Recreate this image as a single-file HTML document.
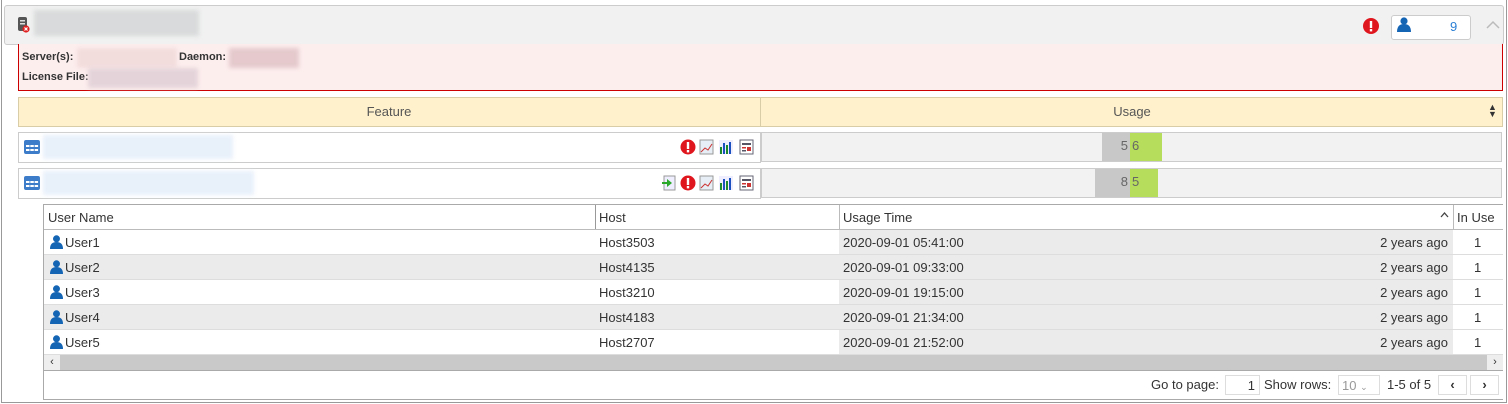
<!DOCTYPE html>
<html><head><style>
*{box-sizing:border-box;margin:0;padding:0}
body{width:1508px;height:404px;background:#fff;font-family:"Liberation Sans",sans-serif;font-size:13px;color:#333;position:relative;overflow:hidden}
.a{position:absolute}
.blur{position:absolute;filter:blur(2px)}
td{padding:0 5px}
</style></head><body>
<div class="a" style="left:1px;top:0;width:1506px;height:403px;border:1px solid #999;border-top:none"></div>
<div class="a" style="left:4px;top:5px;width:1500px;height:40px;background:#f1f1f1;border:1px solid #ccc;border-radius:3px"></div>
<svg class="a" style="left:17px;top:17px" width="14" height="16" viewBox="0 0 14 16"><rect x="1" y="0" width="9" height="14" rx="2" fill="#555"/><rect x="3" y="3" width="5" height="1.5" fill="#ddd"/><rect x="3" y="6" width="5" height="1.5" fill="#ddd"/><circle cx="9" cy="12" r="3.6" fill="#e02020"/><path d="M7.5 10.5l3 3M10.5 10.5l-3 3" stroke="#fff" stroke-width="1.2"/></svg>
<div class="blur" style="left:34px;top:10px;width:165px;height:26px;background:#d8dadb"></div>
<svg class="a" style="left:1363px;top:18px" width="16" height="16"><circle cx="8" cy="8" r="8" fill="#e0161e"/><rect x="6.8" y="3" width="2.4" height="7" fill="#fff"/><rect x="6.8" y="11" width="2.4" height="2.4" fill="#fff"/></svg>
<div class="a" style="left:1391px;top:15px;width:80px;height:25px;background:#fff;border:1px solid #ccc;border-radius:3px"></div>
<svg class="a" style="left:1397px;top:17px" width="14" height="15"><circle cx="7" cy="4" r="3.6" fill="#1565b5"/><path d="M0 15 Q0 7 7 7 Q14 7 14 15Z" fill="#1565b5"/></svg>
<div class="a" style="left:1450px;top:19px;color:#2a7fd4">9</div>
<svg class="a" style="left:1486px;top:20px" width="14" height="9"><path d="M1 8L7 2L13 8" stroke="#bbb" stroke-width="1.5" fill="none"/></svg>
<div class="a" style="left:18px;top:44px;width:1485px;height:47px;background:#fdeeee;border:1px solid #c00;border-top:none"></div>
<div class="a" style="left:22px;top:51px;font-size:11px;font-weight:bold">Server(s):</div>
<div class="blur" style="left:77px;top:48px;width:100px;height:20px;background:#f3dcdc"></div>
<div class="a" style="left:179px;top:51px;font-size:11px;font-weight:bold">Daemon:</div>
<div class="blur" style="left:229px;top:48px;width:70px;height:20px;background:#e5c9cc"></div>
<div class="a" style="left:22px;top:71px;font-size:11px;font-weight:bold">License File:</div>
<div class="blur" style="left:88px;top:68px;width:110px;height:20px;background:#e4d4da"></div>
<div class="a" style="left:18px;top:97px;width:1485px;height:30px;background:#fff1cc;border:1px solid #d9cda8"></div>
<div class="a" style="left:760px;top:97px;width:1px;height:30px;background:#d9cda8"></div>
<div class="a" style="left:18px;top:104px;width:742px;text-align:center;color:#555">Feature</div>
<div class="a" style="left:761px;top:104px;width:742px;text-align:center;color:#555">Usage</div>
<div class="a" style="left:1488px;top:104px;font-size:9px;line-height:7px">▲<br>▼</div>
<!-- row1 -->
<div class="a" style="left:18px;top:132px;width:743px;height:31px;border:1px solid #ccc;background:#fff"></div>
<div class="a" style="left:761px;top:132px;width:741px;height:30px;border:1px solid #ccc;background:#f2f2f2"></div>
<div class="a" style="left:1102px;top:133px;width:28px;height:28px;background:#c8c8c8;color:#666;text-align:right;padding:5px 2px 0 0">5</div>
<div class="a" style="left:1130px;top:133px;width:32px;height:28px;background:#b6dd5c;color:#666;padding:5px 0 0 2px">6</div>
<div class="a" style="left:18px;top:168px;width:743px;height:31px;border:1px solid #ccc;background:#fff"></div>
<div class="a" style="left:761px;top:168px;width:741px;height:30px;border:1px solid #ccc;background:#f2f2f2"></div>
<div class="a" style="left:1095px;top:169px;width:35px;height:28px;background:#c8c8c8;color:#666;text-align:right;padding:5px 2px 0 0">8</div>
<div class="a" style="left:1130px;top:169px;width:28px;height:28px;background:#b6dd5c;color:#666;padding:5px 0 0 2px">5</div>
<svg class="a" style="left:24px;top:140px" width="16" height="14"><rect width="16" height="14" rx="2" fill="#3d7cc9"/><g fill="#fff"><rect x="2" y="5" width="3.5" height="2"/><rect x="6.3" y="5" width="3.5" height="2"/><rect x="10.6" y="5" width="3.5" height="2"/><rect x="2" y="9" width="3.5" height="2"/><rect x="6.3" y="9" width="3.5" height="2"/><rect x="10.6" y="9" width="3.5" height="2"/></g></svg>
<svg class="a" style="left:24px;top:176px" width="16" height="14"><rect width="16" height="14" rx="2" fill="#3d7cc9"/><g fill="#fff"><rect x="2" y="5" width="3.5" height="2"/><rect x="6.3" y="5" width="3.5" height="2"/><rect x="10.6" y="5" width="3.5" height="2"/><rect x="2" y="9" width="3.5" height="2"/><rect x="6.3" y="9" width="3.5" height="2"/><rect x="10.6" y="9" width="3.5" height="2"/></g></svg>
<div class="blur" style="left:43px;top:135px;width:190px;height:24px;background:#e8f0fa"></div>
<div class="blur" style="left:43px;top:171px;width:211px;height:24px;background:#e8f0fa"></div>
<!-- action icons -->
<svg class="a" style="left:680px;top:139px" width="76" height="16">
<circle cx="8" cy="8" r="7.5" fill="#e0161e"/><rect x="6.8" y="3" width="2.4" height="7" fill="#fff"/><rect x="6.8" y="11" width="2.4" height="2.4" fill="#fff"/>
<rect x="20" y="1" width="13" height="14" fill="#e8eef5" stroke="#999"/><path d="M21 13L25 9L28 11L32 5" stroke="#c33" fill="none"/>
<rect x="39" y="1" width="14" height="14" fill="#eef"/><rect x="40" y="8" width="2" height="7" fill="#1a8a2a"/><rect x="43" y="4" width="2" height="11" fill="#1a50c0"/><rect x="46" y="6" width="2" height="9" fill="#1a8a2a"/><rect x="49" y="3" width="2" height="12" fill="#1a50c0"/>
<rect x="60" y="1" width="13" height="14" fill="#fff" stroke="#667"/><rect x="62" y="4" width="9" height="2" fill="#556"/><rect x="62" y="8" width="4" height="1.5" fill="#c33"/><rect x="67" y="8" width="4" height="4" fill="#c33"/><rect x="62" y="11" width="4" height="1.5" fill="#556"/>
</svg>
<svg class="a" style="left:661px;top:175px" width="95" height="16">
<rect x="3" y="1" width="11" height="14" fill="#eef" stroke="#999"/><path d="M1 7h5V4l5 4-5 4V9H1z" fill="#2aa82a"/>
<g transform="translate(19,0)"><circle cx="8" cy="8" r="7.5" fill="#e0161e"/><rect x="6.8" y="3" width="2.4" height="7" fill="#fff"/><rect x="6.8" y="11" width="2.4" height="2.4" fill="#fff"/>
<rect x="20" y="1" width="13" height="14" fill="#e8eef5" stroke="#999"/><path d="M21 13L25 9L28 11L32 5" stroke="#c33" fill="none"/>
<rect x="39" y="1" width="14" height="14" fill="#eef"/><rect x="40" y="8" width="2" height="7" fill="#1a8a2a"/><rect x="43" y="4" width="2" height="11" fill="#1a50c0"/><rect x="46" y="6" width="2" height="9" fill="#1a8a2a"/><rect x="49" y="3" width="2" height="12" fill="#1a50c0"/>
<rect x="60" y="1" width="13" height="14" fill="#fff" stroke="#667"/><rect x="62" y="4" width="9" height="2" fill="#556"/><rect x="62" y="8" width="4" height="1.5" fill="#c33"/><rect x="67" y="8" width="4" height="4" fill="#c33"/><rect x="62" y="11" width="4" height="1.5" fill="#556"/></g>
</svg>
<!-- table -->
<div class="a" style="left:43px;top:204px;width:1460px;height:196px;border:1px solid #aaa;border-right:none;background:#fff"></div>
<div class="a" style="left:44px;top:229px;width:1459px;height:1px;background:#bbb"></div>
<div class="a" style="left:595px;top:205px;width:1px;height:24px;background:#999"></div>
<div class="a" style="left:839px;top:205px;width:1px;height:24px;background:#bbb"></div>
<div class="a" style="left:1453px;top:205px;width:1px;height:24px;background:#bbb"></div>
<div class="a" style="left:48px;top:210px">User Name</div>
<div class="a" style="left:599px;top:210px">Host</div>
<div class="a" style="left:843px;top:210px">Usage Time</div>
<svg class="a" style="left:1440px;top:212px" width="9" height="6"><path d="M1 5L4.5 1L8 5" stroke="#444" stroke-width="1.3" fill="none"/></svg>
<div class="a" style="left:1457px;top:210px">In Use</div>
<div id="rows"></div>
<div class="a" style="left:44px;top:355px;width:1459px;height:15px;background:#c9c9c9"></div>
<div class="a" style="left:44px;top:355px;width:16px;height:15px;background:#eee;font-size:11px;text-align:center;line-height:15px">‹</div>
<div class="a" style="left:1487px;top:355px;width:16px;height:15px;background:#eee;font-size:11px;text-align:center;line-height:15px">›</div>
<div class="a" style="left:44px;top:370px;width:1459px;height:1px;background:#aaa"></div>
<div class="a" style="left:1151px;top:377px">Go to page:</div>
<div class="a" style="left:1225px;top:375px;width:35px;height:20px;border:1px solid #ddd;text-align:right;padding:2px 4px 0 0">1</div>
<div class="a" style="left:1264px;top:377px">Show rows:</div>
<div class="a" style="left:1338px;top:375px;width:42px;height:20px;border:1px solid #ddd;color:#999;padding:2px 0 0 3px">10 <span style="font-size:9px">⌄</span></div>
<div class="a" style="left:1387px;top:377px">1-5 of 5</div>
<div class="a" style="left:1438px;top:375px;width:29px;height:20px;border:1px solid #ddd;text-align:center;font-weight:bold;padding-top:1px">‹</div>
<div class="a" style="left:1470px;top:375px;width:29px;height:20px;border:1px solid #ddd;text-align:center;font-weight:bold;padding-top:1px">›</div>
<script>
var d=[["User1","Host3503","2020-09-01 05:41:00"],["User2","Host4135","2020-09-01 09:33:00"],["User3","Host3210","2020-09-01 19:15:00"],["User4","Host4183","2020-09-01 21:34:00"],["User5","Host2707","2020-09-01 21:52:00"]];
var h="";d.forEach(function(r,i){var t=230+i*25,bg=i%2?"#ebebeb":"#fff";
h+='<div class="a" style="left:44px;top:'+t+'px;width:1409px;height:25px;background:'+bg+';border-bottom:1px solid #ddd"></div>';
h+='<div class="a" style="left:839px;top:'+t+'px;width:614px;height:25px;background:#ebebeb;border-bottom:1px solid #ddd"></div>';
h+='<div class="a" style="left:1453px;top:'+t+'px;width:50px;height:25px;background:#fff;border-bottom:1px solid #ddd"></div>';
h+='<svg class="a" style="left:50px;top:'+(t+5)+'px" width="13" height="14"><circle cx="6.5" cy="3.8" r="3.5" fill="#1565b5"/><path d="M0 14Q0 7 6.5 7Q13 7 13 14Z" fill="#1565b5"/></svg>';
h+='<div class="a" style="left:65px;top:'+(t+5)+'px">'+r[0]+'</div><div class="a" style="left:599px;top:'+(t+5)+'px">'+r[1]+'</div><div class="a" style="left:843px;top:'+(t+5)+'px">'+r[2]+'</div><div class="a" style="left:1349px;top:'+(t+5)+'px;width:99px;text-align:right">2 years ago</div><div class="a" style="left:1474px;top:'+(t+5)+'px">1</div>';});
document.getElementById("rows").innerHTML=h;
</script>
</body></html>
